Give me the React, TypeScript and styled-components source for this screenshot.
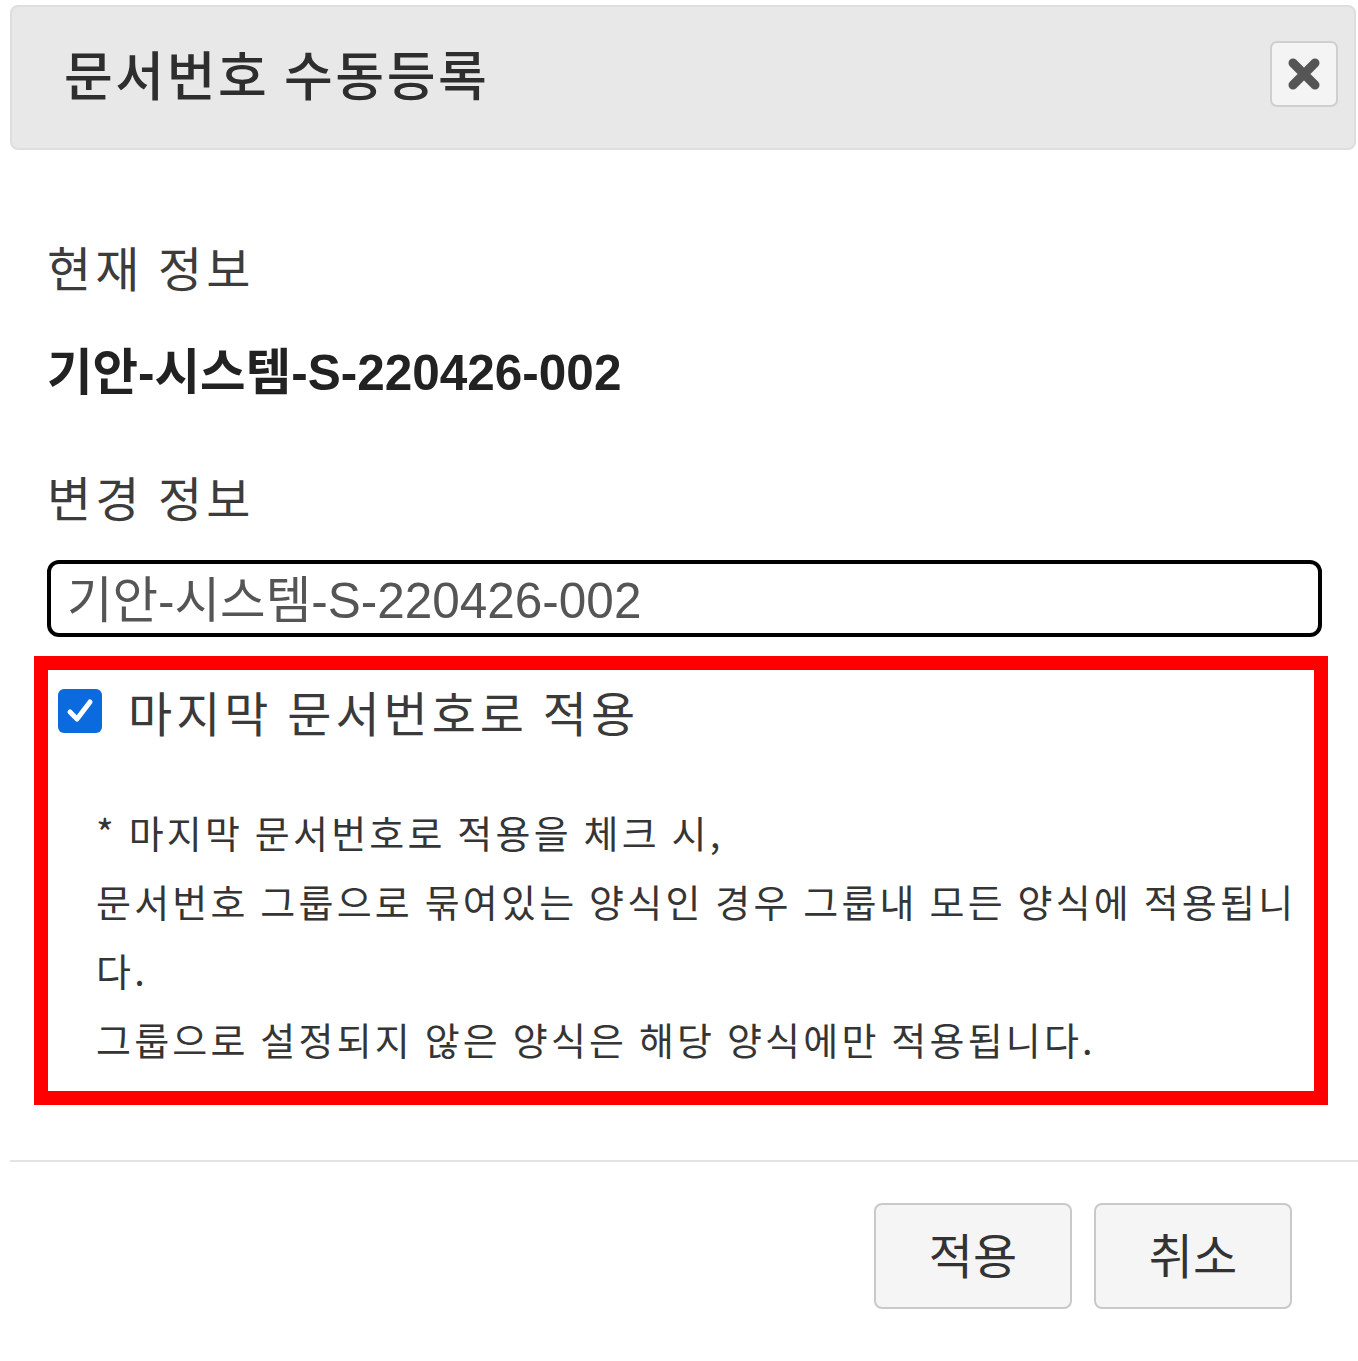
import React, { useState } from "react";
import styled, { createGlobalStyle } from "styled-components";

const GlobalStyle = createGlobalStyle`
  html, body {
    margin: 0;
    padding: 0;
    background: #ffffff;
  }
  body {
    font-family: "Noto Sans CJK KR", "Noto Sans", sans-serif;
    color: #333;
  }
`;

const Dialog = styled.div`
  width: 1358px;
  height: 1361px;
  box-sizing: border-box;
  padding-top: 5px;
  overflow: hidden;
`;

const Header = styled.div`
  margin: 0 2px 0 10px;
  height: 145px;
  box-sizing: border-box;
  background: #e8e8e8;
  border: 2px solid #dedede;
  border-radius: 8px;
  display: flex;
  align-items: center;
  justify-content: space-between;
  padding: 0 16px 0 52px;
`;

const Title = styled.h1`
  margin: 0;
  font-size: 53px;
  font-weight: 500;
  letter-spacing: 2.6px;
  color: #2e2e2e;
  line-height: 1;
  padding-bottom: 8px;
`;

const CloseButton = styled.button`
  width: 68px;
  height: 66px;
  box-sizing: border-box;
  background: #f4f4f4;
  border: 2px solid #cfcfcf;
  border-radius: 7px;
  display: flex;
  align-items: center;
  justify-content: center;
  padding: 0;
  margin-bottom: 8px;
`;

const Body = styled.div`
  padding: 0 36px 0 47px;
`;

const SectionLabel = styled.div<{ $top: number }>`
  margin-top: ${(p) => p.$top}px;
  font-size: 48px;
  letter-spacing: 4px;
  line-height: 1;
  color: #3c3c3c;
`;

const CurrentNumber = styled.div`
  margin-top: 58px;
  font-family: "Liberation Sans", "Noto Sans CJK KR", sans-serif;
  font-weight: bold;
  font-size: 49.5px;
  line-height: 1;
  color: #222;
`;

const NumberInput = styled.input`
  display: block;
  margin-top: 40px;
  width: 1275px;
  height: 77px;
  box-sizing: border-box;
  border: 4px solid #000;
  border-radius: 12px;
  padding: 0 0 4px 16px;
  font-family: "Liberation Sans", "Noto Sans CJK KR", sans-serif;
  font-size: 49.5px;
  color: #555;
  outline: none;
  background: #fff;
`;

const Highlight = styled.div`
  margin: 19px -6px 0 -13px;
  border: 14px solid #ff0000;
  height: 449px;
  box-sizing: border-box;
  padding: 17px 0 0 10px;
`;

const CheckRow = styled.label`
  display: flex;
  align-items: center;
  gap: 26px;
  font-size: 48px;
  letter-spacing: 4px;
  line-height: 1;
  color: #3a3a3a;
`;

const CheckBox = styled.span<{ $checked: boolean }>`
  width: 44px;
  height: 44px;
  box-sizing: border-box;
  border-radius: 6px;
  background: ${(p) => (p.$checked ? "#0b6bde" : "#fff")};
  border: ${(p) => (p.$checked ? "none" : "2px solid #767676")};
  display: flex;
  align-items: center;
  justify-content: center;
  flex: none;
`;

const Notes = styled.div`
  margin-top: 62px;
  padding-left: 38px;
  font-size: 38px;
  letter-spacing: 3.2px;
  line-height: 69px;
  color: #353535;
`;

const NoteLine = styled.div`
  white-space: nowrap;
`;

const Divider = styled.hr`
  margin: 55px 0 0 10px;
  border: none;
  border-top: 2px solid #e3e3e3;
`;

const Footer = styled.div`
  display: flex;
  justify-content: flex-end;
  gap: 22px;
  padding: 41px 66px 0 0;
`;

const FooterButton = styled.button`
  width: 198px;
  height: 106px;
  box-sizing: border-box;
  background: #f5f5f5;
  border: 2px solid #c9c9c9;
  border-radius: 8px;
  font-family: "Noto Sans CJK KR", sans-serif;
  font-size: 48px;
  color: #333;
  padding: 0 0 6px;
`;

const App: React.FC = () => {
  const [checked, setChecked] = useState(true);
  const current = "기안-시스템-S-220426-002";

  return (
    <>
      <GlobalStyle />
      <Dialog>
        <Header>
          <Title>문서번호 수동등록</Title>
          <CloseButton aria-label="닫기">
            <svg width="34" height="34" viewBox="0 0 34 34">
              <path
                d="M6 6 L28 28 M28 6 L6 28"
                stroke="#555"
                strokeWidth="9"
                strokeLinecap="round"
              />
            </svg>
          </CloseButton>
        </Header>
        <Body>
          <SectionLabel $top={92}>현재 정보</SectionLabel>
          <CurrentNumber>{current}</CurrentNumber>
          <SectionLabel $top={74}>변경 정보</SectionLabel>
          <NumberInput defaultValue={current} />
          <Highlight>
            <CheckRow onClick={() => setChecked(!checked)}>
              <CheckBox $checked={checked}>
                {checked && (
                  <svg width="30" height="30" viewBox="0 0 30 30">
                    <path
                      d="M5 16 L12 23 L25 6"
                      stroke="#fff"
                      strokeWidth="5"
                      fill="none"
                      strokeLinecap="round"
                      strokeLinejoin="round"
                    />
                  </svg>
                )}
              </CheckBox>
              마지막 문서번호로 적용
            </CheckRow>
            <Notes>
              <NoteLine>* 마지막 문서번호로 적용을 체크 시,</NoteLine>
              <NoteLine>
                문서번호 그룹으로 묶여있는 양식인 경우 그룹내 모든 양식에 적용됩니
              </NoteLine>
              <NoteLine>다.</NoteLine>
              <NoteLine>그룹으로 설정되지 않은 양식은 해당 양식에만 적용됩니다.</NoteLine>
            </Notes>
          </Highlight>
        </Body>
        <Divider />
        <Footer>
          <FooterButton>적용</FooterButton>
          <FooterButton>취소</FooterButton>
        </Footer>
      </Dialog>
    </>
  );
};

export default App;
